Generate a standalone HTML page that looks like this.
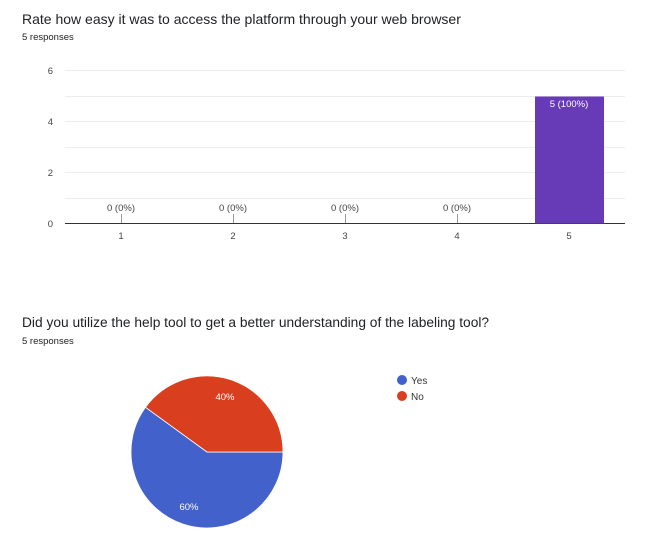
<!DOCTYPE html>
<html><head><style>
body{margin:0;width:666px;height:546px;background:#fff;font-family:"Liberation Sans",Arial,sans-serif;overflow:hidden;position:relative}
.t{position:absolute;left:22px;font-size:14px;color:#202124;white-space:nowrap}
.r{position:absolute;left:22px;font-size:9.5px;color:#202124}
svg{position:absolute;left:0;top:0}
</style></head><body>
<div class="t" style="top:11px">Rate how easy it was to access the platform through your web browser</div>
<div class="r" style="top:32px">5 responses</div>
<div class="t" style="top:315px;font-size:13.75px">Did you utilize the help tool to get a better understanding of the labeling tool?</div>
<div class="r" style="top:336px">5 responses</div>
<svg width="666" height="546" font-family="Liberation Sans, Arial, sans-serif">
<g stroke="#ececec" stroke-width="1">
<line x1="65" y1="70.5" x2="625" y2="70.5"/>
<line x1="65" y1="96.5" x2="625" y2="96.5"/>
<line x1="65" y1="121.5" x2="625" y2="121.5"/>
<line x1="65" y1="147.5" x2="625" y2="147.5"/>
<line x1="65" y1="172.5" x2="625" y2="172.5"/>
<line x1="65" y1="198.5" x2="625" y2="198.5"/>
</g>
<line x1="65" y1="223.5" x2="625" y2="223.5" stroke="#333" stroke-width="1"/>
<rect x="535" y="96.5" width="69" height="127" fill="#673ab7"/>
<g stroke="#999" stroke-width="1">
<line x1="121.5" y1="214" x2="121.5" y2="223"/>
<line x1="233.5" y1="214" x2="233.5" y2="223"/>
<line x1="345.5" y1="214" x2="345.5" y2="223"/>
<line x1="457.5" y1="214" x2="457.5" y2="223"/>
</g>
<g font-size="9.5" fill="#444" text-anchor="middle">
<text x="121" y="211">0 (0%)</text>
<text x="233" y="211">0 (0%)</text>
<text x="345" y="211">0 (0%)</text>
<text x="457" y="211">0 (0%)</text>
<text x="569" y="107" fill="#fff">5 (100%)</text>
<text x="121" y="239">1</text>
<text x="233" y="239">2</text>
<text x="345" y="239">3</text>
<text x="457" y="239">4</text>
<text x="569" y="239">5</text>
</g>
<g font-size="9.5" fill="#444" text-anchor="end">
<text x="53" y="74">6</text>
<text x="53" y="125">4</text>
<text x="53" y="176">2</text>
<text x="53" y="227">0</text>
</g>
<path d="M207 452 L283 452 A76 76 0 1 1 145.5 407.3 Z" fill="#4361cb" stroke="#fff" stroke-width="0.8"/>
<path d="M207 452 L145.5 407.3 A76 76 0 0 1 283 452 Z" fill="#d93f1e" stroke="#fff" stroke-width="0.8"/>
<text x="225" y="400" font-size="9.5" fill="#fff" text-anchor="middle">40%</text>
<text x="189" y="510" font-size="9.5" fill="#fff" text-anchor="middle">60%</text>
<circle cx="402" cy="380" r="5" fill="#4361cb"/>
<circle cx="402" cy="396" r="5" fill="#d93f1e"/>
<text x="411" y="384" font-size="10" fill="#333">Yes</text>
<text x="411" y="400" font-size="10" fill="#333">No</text>
</svg>
</body></html>
